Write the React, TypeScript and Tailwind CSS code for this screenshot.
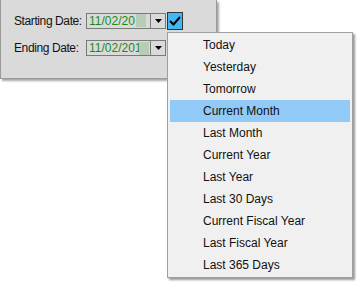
import React from "react";

const items = [
  "Today",
  "Yesterday",
  "Tomorrow",
  "Current Month",
  "Last Month",
  "Current Year",
  "Last Year",
  "Last 30 Days",
  "Current Fiscal Year",
  "Last Fiscal Year",
  "Last 365 Days",
];

function DateBox({ extra }: { extra?: boolean }) {
  return (
    <div className="flex h-[16px] w-[80px] shrink-0 border border-[#7a7a7a] bg-[#dadada]">
      <div className="flex flex-1 items-center pl-[2px] text-[12px] leading-none whitespace-nowrap text-[#1a8a1a]">
        <span>{extra ? "11/02/201" : "11/02/20"}</span>
        <span
          className={`relative h-[13px] w-[10px] bg-[#b5ceb5] ${extra ? "-ml-[3px]" : "ml-[1px]"}`}
        />
      </div>
      <div className="flex w-[15px] items-center justify-center border-l border-[#7a7a7a]">
        <svg width="7" height="4" viewBox="0 0 7 4">
          <path d="M0 0H7L3.5 4Z" fill="#000" />
        </svg>
      </div>
    </div>
  );
}

export default function App() {
  return (
    <div
      className="relative h-[286px] w-[361px] bg-white"
      style={{ fontFamily: '"Liberation Sans", Arial, sans-serif' }}
    >
      <div className="flex h-[79px] w-[217px] flex-col gap-[10px] border-b border-l border-r border-[#9a9a9a] bg-[#dadada] pl-[13px] pt-[11px] shadow-[2px_2px_2px_rgba(0,0,0,0.35)]">
        <div className="flex items-center">
          <span className="w-[72px] shrink-0 whitespace-nowrap text-[12px] leading-none tracking-[-0.4px] text-[#111]">
            Starting Date:
          </span>
          <DateBox />
          <div className="ml-[1px] mt-[1px] flex h-[18px] w-[16px] shrink-0 items-center justify-center border border-[#333] bg-[#42b8f3]">
            <svg width="12" height="10" viewBox="0 0 12 10">
              <path d="M1 5L4.5 8.5L11 1" stroke="#000" strokeWidth="2" fill="none" />
            </svg>
          </div>
        </div>
        <div className="flex items-center">
          <span className="w-[72px] shrink-0 whitespace-nowrap text-[12px] leading-none tracking-[-0.4px] text-[#111]">
            Ending Date:
          </span>
          <DateBox extra />
        </div>
      </div>

      <div className="absolute left-[167px] top-[32px] flex w-[186px] flex-col border border-[#a0a0a0] bg-[#f0f0f0] px-[2px] py-[1px] shadow-[2px_2px_2px_rgba(0,0,0,0.4)]">
        {items.map((it) => (
          <div
            key={it}
            className={`flex h-[22px] items-center whitespace-nowrap pl-[33px] text-[12px] text-[#111] ${
              it === "Current Month" ? "bg-[#91c9f7]" : ""
            }`}
          >
            {it}
          </div>
        ))}
      </div>
    </div>
  );
}
